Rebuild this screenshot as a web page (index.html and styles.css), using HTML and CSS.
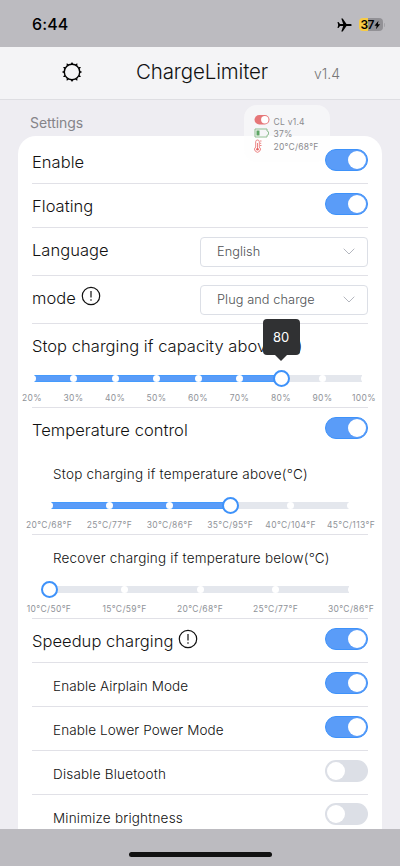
FILE: index.html
```html
<!DOCTYPE html>
<html lang="en">
<head>
<meta charset="utf-8">
<title>ChargeLimiter</title>
<link rel="stylesheet" href="styles.css">
</head>
<body>
<div class="screen">
  <div class="status">
    <span class="time">6:44</span>
    <svg class="plane" viewBox="0 0 15 14"><path d="M14.8 7c0-.7-1-1.1-2-1.1H9.500L5.700.5H4.300L6.200 5.900H3L1.500 4H.5L1.200 7 .5 10h1L3 8.100h3.200L4.300 13.500h1.400L9.500 8.100h3.300c1 0 2-.4 2-1.100z"/></svg>
    <span class="battery"><b>37</b><svg viewBox="0 0 7 10"><path d="M4.800.4.500 5.700h2.400L2.100 9.600 6.600 4.300H4.100z"/></svg></span>
    <i class="nub"></i>
  </div>
  <header class="header">
    <svg class="gear" viewBox="0 0 22 22"><circle cx="11" cy="11" r="7.700"/><path d="M9.700 2.900 11 .9l1.300 2zM14.100 3.400l2.200-1.200.1 2.600zM17.400 5.900l2.500.1-1.200 2.200zM19.100 9.700l2 1.300-2 1.300zM18.700 13.800l1.200 2.200-2.500.1zM16.400 17.200l-.1 2.600-2.200-1.200zM12.300 19.100l-1.300 2-1.300-2zM7.900 18.600l-2.200 1.200-.1-2.600zM4.600 16.100 2.100 16l1.200-2.200zM2.900 12.300l-2-1.300 2-1.300zM3.300 8.200 2.100 6l2.500-.1zM5.600 4.800l.1-2.600 2.200 1.200z"/></svg>
    <h1>ChargeLimiter</h1>
    <span class="version">v1.4</span>
  </header>
  <main>
    <h2>Settings</h2>
    <section class="card">
      <div class="row"><span class="label">Enable</span><i class="switch on"></i></div>
      <div class="row"><span class="label">Floating</span><i class="switch on"></i></div>
      <div class="row tall"><span class="label">Language</span>
        <div class="select"><span>English</span><svg viewBox="0 0 12 7"><path d="M.7.7 6 6 11.300.7"/></svg></div></div>
      <div class="row tall"><span class="label mode">mode</span>
        <svg class="info" viewBox="0 0 20 20"><circle cx="10" cy="10" r="8.700"/><path d="M10 5v6.500M10 13.300v1.500"/></svg>
        <div class="select"><span>Plug and charge</span><svg viewBox="0 0 12 7"><path d="M.7.7 6 6 11.300.7"/></svg></div></div>
      <div class="group capacity">
        <span class="label">Stop charging if capacity above(%)</span>
        <div class="slider full">
          <div class="track"><i class="fill"></i></div>
          <div class="stops"><i></i><i></i><i></i><i></i><i></i><i></i><i></i><i></i><i></i></div>
          <div class="thumb"><span class="tip">80</span></div>
          <div class="marks"><span>20%</span><span>30%</span><span>40%</span><span>50%</span><span>60%</span><span>70%</span><span>80%</span><span>90%</span><span>100%</span></div>
        </div>
      </div>
      <div class="plain"><span class="label">Temperature control</span><i class="switch on"></i></div>
      <div class="group upper">
        <span class="label sub">Stop charging if temperature above(°C)</span>
        <div class="slider">
          <div class="track"><i class="fill"></i></div>
          <div class="stops"><i></i><i></i><i></i><i></i><i></i><i></i></div>
          <div class="thumb"></div>
          <div class="marks"><span>20°C/68°F</span><span>25°C/77°F</span><span>30°C/86°F</span><span>35°C/95°F</span><span>40°C/104°F</span><span>45°C/113°F</span></div>
        </div>
      </div>
      <div class="group lower">
        <span class="label sub">Recover charging if temperature below(°C)</span>
        <div class="slider">
          <div class="track"></div>
          <div class="stops"><i></i><i></i><i></i><i></i><i></i></div>
          <div class="thumb"></div>
          <div class="marks"><span>10°C/50°F</span><span>15°C/59°F</span><span>20°C/68°F</span><span>25°C/77°F</span><span>30°C/86°F</span></div>
        </div>
      </div>
      <div class="row"><span class="label">Speedup charging</span>
        <svg class="info" viewBox="0 0 20 20"><circle cx="10" cy="10" r="8.700"/><path d="M10 5v6.500M10 13.300v1.500"/></svg><i class="switch on"></i></div>
      <div class="row"><span class="label sub tight">Enable Airplain Mode</span><i class="switch on"></i></div>
      <div class="row"><span class="label sub tight">Enable Lower Power Mode</span><i class="switch on"></i></div>
      <div class="row"><span class="label sub">Disable Bluetooth</span><i class="switch"></i></div>
      <div class="row last"><span class="label sub">Minimize brightness</span><i class="switch"></i></div>
    </section>
  </main>
  <aside class="floating">
    <svg viewBox="0 0 16 12"><rect x=".5" y="1" width="15" height="9.500" rx="4.750" fill="#e67678"/><circle cx="10.800" cy="5.750" r="3.700" fill="#fff"/></svg><span>CL v1.4</span>
    <svg viewBox="0 0 16 12"><path d="M1 2h12v2l1.500.8v2.700L13 8.300V10H1z" fill="none" stroke="#8fbd91"/><path d="M2.500 3.500h3v5h-3z" fill="#5da563"/></svg><span>37%</span>
    <svg viewBox="0 0 16 14"><path d="M2.700 8V2.800a1.800 1.800 0 0 1 3.600 0V8a2.900 2.900 0 1 1-3.600 0zM4.500 4v6M7 2h1.500M7 4.300h1.200M7 6.500h1.500" fill="none" stroke="#ec8585"/><circle cx="4.500" cy="10.300" r="1.300" fill="#e86363"/></svg><span>20°C/68°F</span>
  </aside>
  <footer><i></i></footer>
</div>
</body>
</html>
```
FILE: styles.css
```css
* { box-sizing: border-box; }
body { margin: 0; font-family: Inter, "Liberation Sans", sans-serif; background: #eeedf2; }
i { font-style: normal; display: block; }
svg { display: block; flex: none; }
.screen { position: relative; width: 400px; height: 866px; display: flex; flex-direction: column; overflow: hidden; }

.status { height: 47px; flex: none; background: #bcbbc0; display: flex; align-items: center; padding: 2px 15px 0 32px; }
.time { font-size: 16px; font-weight: 500; line-height: 20px; letter-spacing: 0.1px; margin: -1px auto 0 0; }
.plane { width: 15px; height: 14px; margin-right: 7px; }
.battery { width: 24px; height: 13px; border-radius: 4px; background: linear-gradient(90deg, #f7cb45 37%, #929196 37%); display: flex; align-items: center; justify-content: center; }
.battery b { font-size: 12px; font-weight: 600; letter-spacing: -0.5px; line-height: 13px; }
.battery svg { width: 6.5px; height: 10px; }
.nub { width: 1.5px; height: 4px; background: #a4a3a8; border-radius: 0 2px 2px 0; margin-left: 1px; }

.header { height: 53px; flex: none; background: #f4f4f6; border-bottom: 1px solid #dedee2; display: flex; align-items: center; padding: 0 60px 3px 61px; }
.gear { width: 22px; height: 22px; }
.gear circle { fill: none; stroke: #000; stroke-width: 1.4; }
h1 { margin: 0 0 0 53px; font-size: 20.5px; line-height: 26px; font-weight: 300; letter-spacing: -0.13px; color: #111; }
.version { margin: 4px 0 0 auto; font-size: 14px; font-weight: 300; color: #777; }

main { height: 729px; overflow: hidden; padding: 0 18px; }
h2 { margin: 0; height: 36px; padding: 13px 0 0 12px; font-size: 14px; line-height: 20px; font-weight: 400; letter-spacing: -.05px; color: #858489; }
.card { background: #fff; border-radius: 18px 18px 0 0; padding: 4px 14px 0; }
.row, .plain { height: 44px; display: flex; }
.row { border-bottom: 1px solid #e1e1e7; }
.tall { height: 48px; }
.label { display: block; font-size: 16.5px; line-height: 45px; height: 44px; font-weight: 300; letter-spacing: .04px; color: #111; white-space: nowrap; }
.sub { font-size: 13.5px; line-height: 47px; padding-left: 21px; letter-spacing: 0.2px; }
.upper .sub { line-height: 45px; letter-spacing: .23px; }
.tight { letter-spacing: .1px; }
.switch { position: relative; z-index: 2; width: 43px; height: 22px; margin: 9px 0 0 auto; border-radius: 11px; background: #dcdfe6; padding: 2px; }
.switch::before { content: ""; display: block; width: 18px; height: 18px; border-radius: 50%; background: #fff; }
.switch.on { background: #5a9cf8; border: 1px solid #3e92fa; padding: 1px; }
.switch.on::before { margin-left: auto; }
.last .label { line-height: 46px; }
.last .switch { margin-top: 8px; }
.info { width: 20px; height: 20px; margin: 10px 0 0 5px; fill: none; stroke: #111; stroke-width: 1.2; }
.select { width: 168px; height: 30px; margin: 9px 0 0 auto; border: 1px solid #dcdfe6; border-radius: 4px; padding: 0 12px 1px 16px; display: flex; align-items: center; justify-content: space-between; font-size: 12.75px; font-weight: 300; letter-spacing: .08px; color: #505255; }
.select svg { width: 12px; height: 7px; fill: none; stroke: #b4b7bf; }

.group { border-bottom: 1px solid #e1e1e7; height: 84px; }
.upper { height: 83px; }
.slider { position: relative; margin: 0 17px; height: 38px; --pos: 0%; }
.slider.full { margin: 0 4px 0 0; }
.capacity .slider { --pos: 75%; }
.upper .slider { --pos: 60%; margin-top: -1px; }
.track { position: absolute; top: 7px; left: 2px; right: 2px; height: 7px; background: #e4e7ed; }
.fill { width: var(--pos); height: 7px; background: #5a9cf8; border: solid #459bfd; border-width: 1px 0; }
.stops { position: absolute; top: 7px; left: -3.5px; right: -3.5px; display: flex; justify-content: space-between; }
.stops i { width: 7px; height: 7px; border-radius: 50%; background: #fff; }
.thumb { position: absolute; top: 2px; left: calc(var(--pos) - 8.5px); width: 17px; height: 17px; border: 2px solid #3e92fa; border-radius: 50%; background: #fff; }
.tip { position: absolute; left: -12px; top: -53px; width: 37px; height: 36px; border-radius: 4px; background: #303133; color: #fff; text-align: center; font-size: 13px; line-height: 36px; font-weight: 400; }
.tip::after { content: ""; position: absolute; left: 12.500px; top: 36px; border: 6px solid transparent; border-top-color: #303133; border-bottom: 0; }
.marks { padding-top: 25px; display: flex; justify-content: space-between; font-size: 8.5px; line-height: 11px; letter-spacing: .35px; color: #909399; }
.marks span { width: 0; display: flex; justify-content: center; white-space: nowrap; }

.floating { position: absolute; z-index: 1; left: 244px; top: 105px; width: 86px; height: 57px; border-radius: 13px; background: rgba(254, 254, 254, .55); padding: 9px 0 0 10px; display: grid; grid-template-columns: 19.5px 1fr; grid-template-rows: 12px 13px 13px; align-items: center; font-size: 8.500px; letter-spacing: .25px; color: #8b8b8e; }
.floating span { padding-top: 3px; }
.floating svg { width: 16px; height: 12px; }
.floating svg:nth-of-type(3) { height: 14px; margin-left: -1px; }
footer { height: 37px; flex: none; background: #bcbbc0; display: flex; justify-content: center; padding-top: 23px; }
footer i { width: 143px; height: 5px; border-radius: 3px; background: #111; }
```
